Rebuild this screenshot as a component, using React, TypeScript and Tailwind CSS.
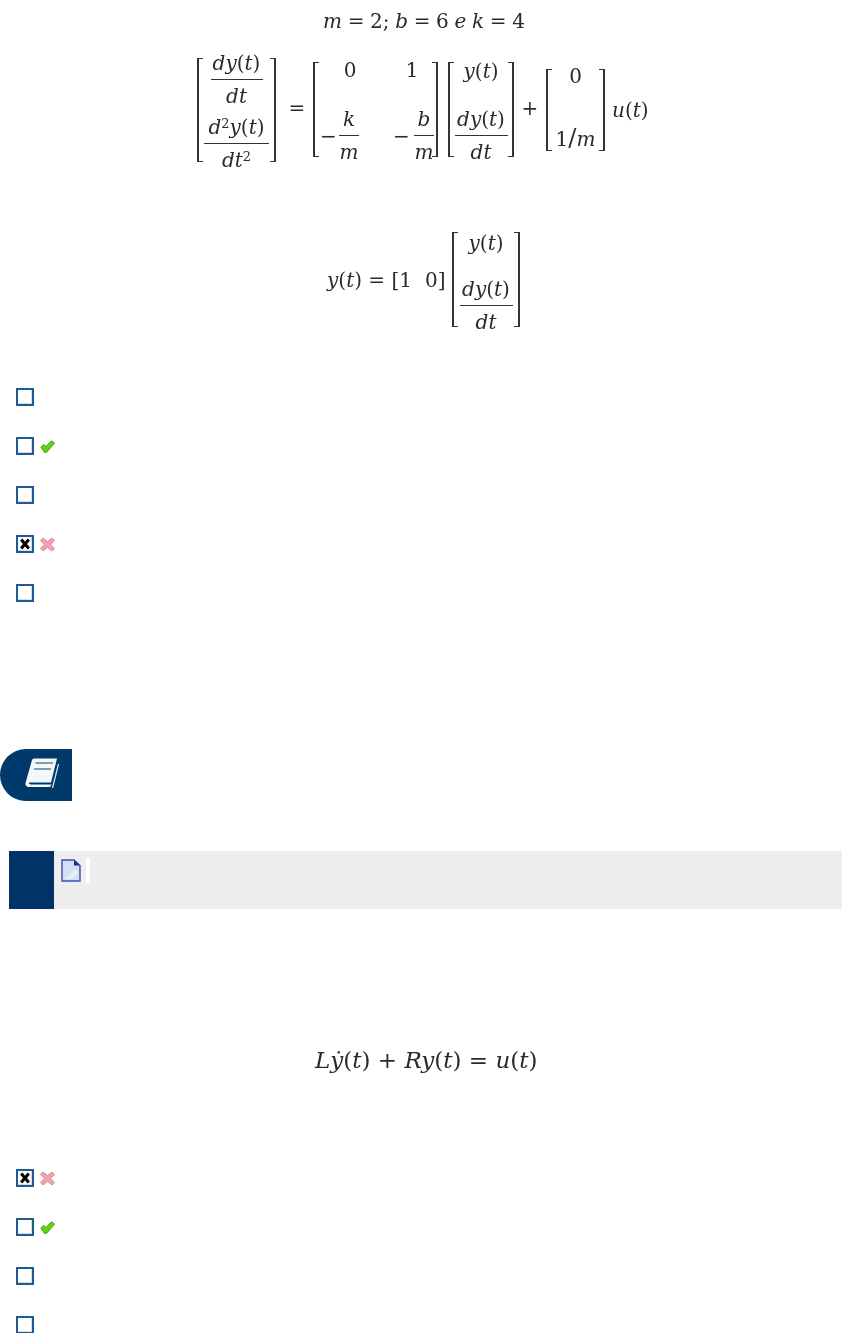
import React from "react";

const I = ({ children }: { children: React.ReactNode }) => <i className="italic">{children}</i>;

const Frac = ({ top, bottom, w }: { top: React.ReactNode; bottom: React.ReactNode; w: string }) => (
  <div className={`flex flex-col items-center ${w}`}>
    <div className="h-[24px] leading-[16px] whitespace-nowrap">{top}</div>
    <div className="h-px w-full shrink-0 bg-[#333]" />
    <div className="h-[24px] leading-[32px] whitespace-nowrap">{bottom}</div>
  </div>
);

const Bracket = ({ children, className }: { children: React.ReactNode; className: string }) => (
  <div className={`flex ${className}`}>
    <div className="w-[6px] shrink-0 border-y border-l-2 border-[#333]" />
    <div className="flex-1 min-w-0">{children}</div>
    <div className="w-[6px] shrink-0 border-y border-r-2 border-[#333]" />
  </div>
);

const Yt = () => <><I>y</I>(<I>t</I>)</>;

const DyDt = ({ w }: { w: string }) => (
  <Frac w={w} top={<><I>dy</I>(<I>t</I>)</>} bottom={<I>dt</I>} />
);

const Check = () => (
  <svg width="15" height="13" viewBox="0 0 15 13">
    <path d="M0.8 7 L4 4.4 L6 6.4 L11.3 0.8 L14.7 3 L6.6 12.4 L4.4 12.4 Z" fill="#62d30c" stroke="#3f8f14" strokeWidth="0.8" />
  </svg>
);

const Cross = () => (
  <svg width="15" height="15" viewBox="0 0 15 15">
    <path d="M3 1 L7.5 4.5 L12 1 L14.5 3.5 L10.7 7.5 L14.5 11.5 L12 14 L7.5 10.5 L3 14 L0.5 11.5 L4.3 7.5 L0.5 3.5 Z" fill="#f0a3aa" stroke="#c8818a" strokeWidth="0.8" />
  </svg>
);

const Option = ({ marked, mark }: { marked?: boolean; mark?: "ok" | "bad" }) => (
  <div className="flex items-center h-[18px] pl-[16px] gap-[6px]">
    <div className="w-[18px] h-[18px] border-2 border-[#1f5a94] bg-white flex items-center justify-center shadow-[inset_-1px_-1px_0_#d5dbe3]">
      {marked && (
        <svg width="12" height="12" viewBox="0 0 12 12">
          <path d="M2.2 1.5 L9.8 10.5 M9.8 1.5 L2.2 10.5" stroke="#000" strokeWidth="3" />
        </svg>
      )}
    </div>
    {mark === "ok" && <Check />}
    {mark === "bad" && <Cross />}
  </div>
);

export default function App() {
  return (
    <div className="w-[842px] h-[1333px] overflow-hidden bg-white text-[#2a2a2a] font-['DejaVu_Serif',serif] text-[20px] leading-none blur-[0.4px]">
      <div className="pt-[10px] h-[32px] pl-[323px] whitespace-nowrap leading-[22px] [word-spacing:-0.7px]">
        <I>m</I> = 2; <I>b</I> = 6 <I>e k</I> = 4
      </div>

      <div className="mt-[24px] h-[108px] pl-[197px] flex items-center">
        <Bracket className="w-[79px] h-[104px]">
          <div className="flex flex-col items-center -mt-[3px] gap-[15px]">
            <DyDt w="w-[52px]" />
            <Frac
              w="w-[65px]"
              top={<><I>d</I><sup className="text-[13px]">2</sup><I>y</I>(<I>t</I>)</>}
              bottom={<><I>dt</I><sup className="text-[13px]">2</sup></>}
            />
          </div>
        </Bracket>
        <div className="ml-[9px] w-[24px] text-center mb-[4px]">=</div>
        <Bracket className="ml-[4px] w-[125px] h-[95px] mb-[1px]">
          <div className="grid grid-cols-[62px_62px] h-[49px] leading-[16px] text-center">
            <div>0</div>
            <div>1</div>
          </div>
          <div className="grid grid-cols-[74px_1fr]">
            <div className="flex items-center pl-[1px]">
              <span className="w-[16px] text-center">−</span>
              <div className="ml-[3px]"><Frac w="w-[20px]" top={<I>k</I>} bottom={<I>m</I>} /></div>
            </div>
            <div className="flex items-center">
              <span className="w-[16px] text-center">−</span>
              <div className="ml-[5px]"><Frac w="w-[20px]" top={<I>b</I>} bottom={<I>m</I>} /></div>
            </div>
          </div>
        </Bracket>
        <Bracket className="ml-[10px] w-[66px] h-[95px] mb-[1px]">
          <div className="flex flex-col items-center">
            <div className="h-[49px] leading-[18px]"><Yt /></div>
            <DyDt w="w-[53px]" />
          </div>
        </Bracket>
        <div className="ml-[7px] w-[18px] text-center mb-[4px]">+</div>
        <Bracket className="ml-[7px] w-[59px] h-[82px]">
          <div className="flex flex-col items-center">
            <div className="h-[52px] leading-[14px]">0</div>
            <div className="leading-[34px] whitespace-nowrap">
              1<span className="text-[24px] font-light">/</span><I>m</I>
            </div>
          </div>
        </Bracket>
        <div className="ml-[7px] whitespace-nowrap"><I>u</I>(<I>t</I>)</div>
      </div>

      <div className="mt-[68px] h-[95px] pl-[327px] flex items-center">
        <div className="w-[125px] whitespace-nowrap"><Yt /> = [1<span className="ml-[13px]">0]</span></div>
        <Bracket className="w-[68px] h-[95px]">
          <div className="flex flex-col items-center">
            <div className="h-[49px] leading-[22px]"><Yt /></div>
            <DyDt w="w-[53px]" />
          </div>
        </Bracket>
      </div>

      <div className="mt-[61px] flex flex-col gap-[31px]">
        <Option />
        <Option mark="ok" />
        <Option />
        <Option marked mark="bad" />
        <Option />
      </div>

      <div className="mt-[147px] w-[72px] h-[52px] bg-[#003a6b] rounded-l-[26px] flex items-center justify-start pl-[22px]">
        <svg width="38" height="38" viewBox="0 0 38 38" fill="none">
          <path d="M12 2.5 Q10.5 2.5 10 4 L3.5 27 Q3 31 7 31 H28 L29.5 28.5 H9 Q6.5 28 7 26.5 H29 L35 2.5 Z" fill="#f4f8fb" />
          <path d="M13.5 7 H31 M12 13 H29" stroke="#7d9cb6" strokeWidth="2" />
          <path d="M36.5 8 L30.5 32" stroke="#cfe0ec" strokeWidth="1.3" />
        </svg>
      </div>

      <div className="mt-[50px] ml-[9px] h-[58px] bg-[#eeeeee] flex items-start">
        <div className="w-[45px] h-full bg-[#003366]" />
        <svg width="20" height="23" viewBox="0 0 20 23" className="ml-[7px] mt-[8px]">
          <path d="M1 1 H13 L19 6.5 V22 H1 Z" fill="#d3e0f3" stroke="#3b4fb0" strokeWidth="1.4" />
          <path d="M13 1 V6.5 H19 Z" fill="#1f2f8a" />
          <path d="M4 20 L14 10 L17 14 L10 20 Z" fill="#e6eefa" />
        </svg>
        <div className="ml-[5px] mt-[7px] w-[4px] h-[25px] bg-white" />
      </div>

      <div className="mt-[139px] h-[24px] pl-[315px] whitespace-nowrap leading-[24px] text-[23px]">
        <I>Lẏ</I>(<I>t</I>) + <I>Ry</I>(<I>t</I>) = <I>u</I>(<I>t</I>)
      </div>

      <div className="mt-[97px] flex flex-col gap-[31px]">
        <Option marked mark="bad" />
        <Option mark="ok" />
        <Option />
        <Option />
      </div>
    </div>
  );
}
